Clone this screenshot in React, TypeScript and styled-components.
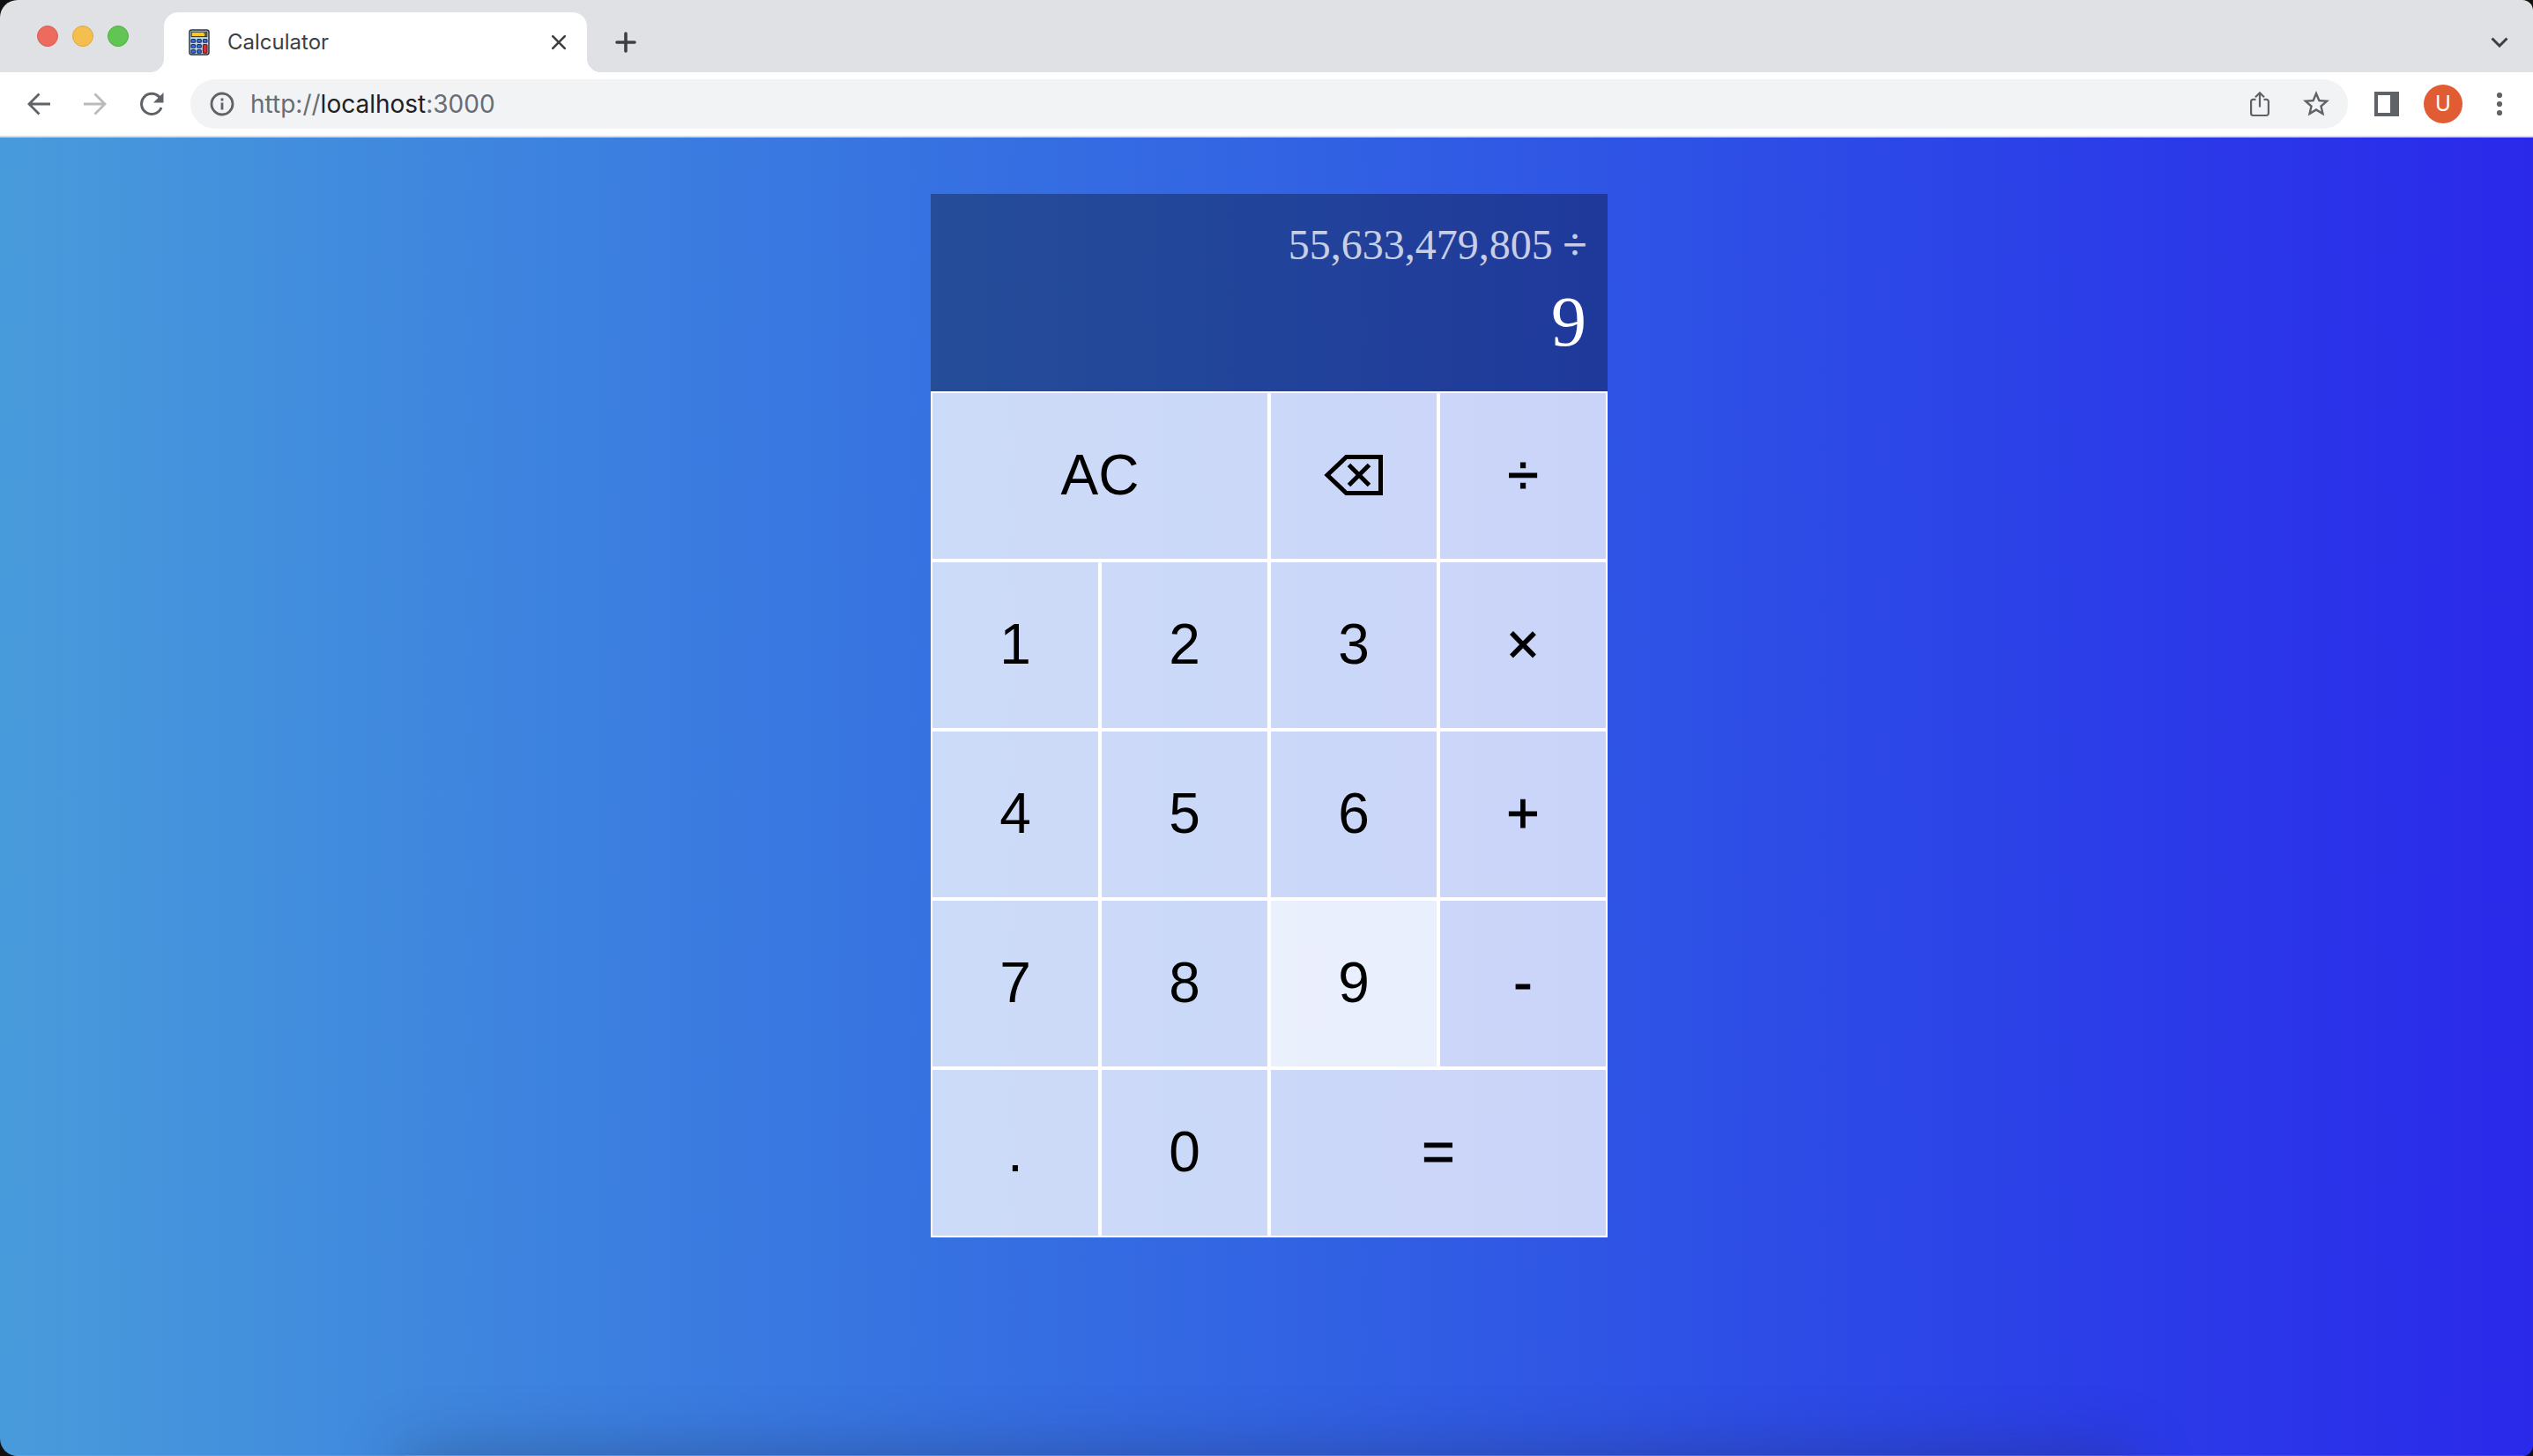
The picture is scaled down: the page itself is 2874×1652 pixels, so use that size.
import React, { useState } from 'react';
import styled, { createGlobalStyle } from 'styled-components';

const GlobalStyle = createGlobalStyle`
  *, *::before, *::after { box-sizing: border-box; }
  body { margin: 0; background: #111; }
  button { font: inherit; border: 0; padding: 0; background: none; cursor: pointer; }
`;

const Window = styled.div`
  display: flex;
  flex-direction: column;
  min-height: 100vh;
  overflow: hidden;
  border-radius: 20px 12px 12px 20px;
  font-family: Inter, Roboto, sans-serif;
`;

const TabStrip = styled.header`
  display: flex;
  align-items: stretch;
  height: 82px;
  padding: 0 16px 0 42px;
  background: #dfe1e5;
`;

const WindowControls = styled.div`
  display: flex;
  align-items: center;
  gap: 16px;
  margin-right: 40px;
`;

const Light = styled.button<{ $fill: string; $edge: string }>`
  width: 24px;
  height: 24px;
  && { border: 1px solid ${(p) => p.$edge}; }
  border-radius: 50%;
  background: ${(p) => p.$fill};
`;

const Tab = styled.div`
  position: relative;
  display: flex;
  align-items: center;
  gap: 20px;
  width: 480px;
  margin-top: 14px;
  padding: 0 16px 0 28px;
  border-radius: 16px 16px 0 0;
  background: #fff;

  &::before,
  &::after {
    content: '';
    position: absolute;
    bottom: 0;
    width: 16px;
    height: 16px;
  }
  &::before {
    right: 100%;
    background: radial-gradient(circle at 0 0, transparent 16px, #fff 16px);
  }
  &::after {
    left: 100%;
    background: radial-gradient(circle at 100% 0, transparent 16px, #fff 16px);
  }
`;

const TabTitle = styled.span`
  flex: 1;
  color: #3c4043;
  font-size: 24px;
  line-height: 32px;
`;

const IconButton = styled.button<{ $size: number; $color?: string }>`
  display: flex;
  flex: none;
  align-items: center;
  justify-content: center;
  width: ${(p) => p.$size}px;
  height: ${(p) => p.$size}px;
  color: ${(p) => p.$color ?? '#5f6368'};
`;

const StripActions = styled.div`
  display: flex;
  flex: 1;
  align-items: center;
  justify-content: space-between;
  margin-top: 14px;
  padding-left: 22px;
`;

const Toolbar = styled.nav`
  display: flex;
  align-items: center;
  height: 74px;
  padding: 0 14px 0 20px;
  border-bottom: 2px solid #d9dbdf;
  background: #fff;
`;

const History = styled.div`
  display: flex;
  gap: 16px;
  margin-right: 20px;
`;

const AddressBar = styled.div`
  display: flex;
  flex: 1;
  align-items: center;
  gap: 16px;
  height: 56px;
  margin-right: 20px;
  padding: 0 12px 0 20px;
  border-radius: 28px;
  background: #f1f3f4;
`;

const Address = styled.div`
  flex: 1;
  outline: none;
  color: #696c70;
  font-size: 28px;
  line-height: 36px;
`;

const Host = styled.span`
  color: #202124;
`;

const ToolbarEnd = styled.div`
  display: flex;
  align-items: center;
  gap: 18px;
`;

const Avatar = styled.button`
  width: 44px;
  height: 44px;
  border-radius: 50%;
  background: #e25c33;
  color: #fff;
  font-size: 24px;
  line-height: 44px;
`;

const Page = styled.main`
  position: relative;
  display: flex;
  flex: 1;
  align-items: flex-start;
  justify-content: center;
  padding: 64px 0;
  border-bottom: 1px solid rgba(255, 255, 255, 0.12);
  background: linear-gradient(to right, #489bdb, #3b7ee0 25%, #3264e3 50%, #2c47e7 75%, #2a29ea);
  background-clip: border-box;

  &::after {
    content: '';
    position: absolute;
    top: 100%;
    left: 16%;
    right: 16%;
    height: 80px;
    box-shadow: 0 0 72px rgba(34, 40, 60, 0.38);
  }
`;

const Calculator = styled.section`
  display: grid;
  grid-template-columns: repeat(4, 192px);
  grid-template-rows: minmax(224px, auto) repeat(5, 192px);
  margin-left: 6px;
`;

const Display = styled.div`
  display: flex;
  flex-direction: column;
  grid-column: 1 / -1;
  align-items: flex-end;
  justify-content: space-around;
  padding: 22px 24px 26px;
  background: rgba(0, 0, 0, 0.32);
  color: #fff;
  font-family: 'Liberation Serif', 'Times New Roman', serif;
`;

const Previous = styled.div`
  opacity: 0.75;
  font-size: 48px;
`;

const Sign = styled.span`
  -webkit-text-stroke: 1px currentColor;
`;

const Current = styled.output`
  font-size: 80px;
`;

const Key = styled.button<{ $wide?: boolean; $lit?: boolean; $operator?: boolean }>`
  display: flex;
  grid-column: span ${(p) => (p.$wide ? 2 : 1)};
  align-items: center;
  justify-content: center;
  && {
    padding-bottom: 2px;
    border: 2px solid #fff;
  }
  background: rgba(255, 255, 255, ${(p) => (p.$lit ? 0.9 : 0.75)});
  color: #000;
  font-family: 'Liberation Sans', Arial, sans-serif;
  font-size: 64px;
  -webkit-text-stroke: ${(p) => (p.$operator ? '1px #000' : '0')};
`;

const Favicon = () => (
  <svg width="24" height="30" viewBox="0 0 24 30" aria-hidden="true">
    <rect x="1" y="1" width="22" height="28" rx="2.5" fill="#c3daf2" stroke="#2b3440" strokeWidth="1.5" />
    <rect x="3.2" y="3.2" width="17.6" height="5.4" fill="#f6c927" stroke="#2b3440" strokeWidth="1.1" />
    <path d="M18 4.500h1.600v3H18M18 4.500v1.500h1.600" fill="none" stroke="#4a3b10" strokeWidth="0.9" />
    {[11.5, 17.5, 23.5].map((y) =>
      [3, 9.7, 16.4].map((x) =>
        x > 16 && y > 12 ? null : (
          <rect key={`${x}-${y}`} x={x} y={y} width="4.6" height="3.8" rx="1" fill="#2f6fea" stroke="#1d2c4d" strokeWidth="1.1" />
        ),
      ),
    )}
    <rect x="16.4" y="17.5" width="4.6" height="9.8" rx="1" fill="#e32b2b" stroke="#5a1820" strokeWidth="1.1" />
  </svg>
);

const CloseIcon = () => (
  <svg width="18" height="18" viewBox="0 0 18 18" fill="none" stroke="currentColor" strokeWidth="2.6" strokeLinecap="round">
    <path d="M2.200 2.200l13.600 13.600M15.800 2.200L2.200 15.800" />
  </svg>
);

const PlusIcon = () => (
  <svg width="24" height="24" viewBox="0 0 24 24" fill="none" stroke="currentColor" strokeWidth="3.6" strokeLinecap="round">
    <path d="M12 2v20M2 12h20" />
  </svg>
);

const ChevronIcon = () => (
  <svg width="20" height="12" viewBox="0 0 20 12" fill="none" stroke="currentColor" strokeWidth="3">
    <path d="M1.500 1.500L10 10l8.500-8.500" />
  </svg>
);

const ArrowIcon = ({ forward }: { forward?: boolean }) => (
  <svg width="28" height="28" viewBox="0 0 28 28" fill="none" stroke="currentColor" strokeWidth="2.8">
    <path d={forward ? 'M1 14h24M13.500 2.400L25 14 13.500 25.600' : 'M27 14H3M14.500 2.400L3 14l11.500 11.600'} />
  </svg>
);

const ReloadIcon = () => (
  <svg width="28" height="28" viewBox="0 0 28 28" aria-hidden="true">
    <path d="M23.500 7A11.600 11.600 0 1 0 25 18" fill="none" stroke="currentColor" strokeWidth="3" />
    <path d="M27.500 1v11.500H16z" fill="currentColor" />
  </svg>
);

const InfoIcon = () => (
  <svg width="32" height="32" viewBox="0 0 32 32" aria-hidden="true">
    <circle cx="16" cy="16" r="12" fill="none" stroke="currentColor" strokeWidth="2.8" />
    <path d="M14.600 14.500h2.800v8h-2.800zM14.600 9.500h2.800v3h-2.800z" fill="currentColor" />
  </svg>
);

const ShareIcon = () => (
  <svg width="24" height="30" viewBox="0 0 24 30" fill="none" stroke="currentColor" strokeWidth="2.2">
    <path d="M7.500 9.800H4.500a2.400 2.400 0 0 0-2.400 2.400v13.400A2.400 2.400 0 0 0 4.500 28h15a2.400 2.400 0 0 0 2.400-2.400V12.200a2.400 2.400 0 0 0-2.400-2.400h-3M12 18.500V2.500M7 7.200l5-5 5 5" />
  </svg>
);

const StarIcon = () => (
  <svg width="36" height="36" viewBox="0 0 24 24" aria-hidden="true">
    <path
      fill="currentColor"
      d="M22 9.240l-7.190-.62L12 2 9.190 8.630 2 9.240l5.460 4.730L5.820 21 12 17.270 18.180 21l-1.630-7.030L22 9.240zM12 15.400l-3.760 2.270 1-4.280-3.320-2.880 4.380-.38L12 6.100l1.710 4.040 4.380.38-3.320 2.880 1 4.280L12 15.400z"
    />
  </svg>
);

const PanelIcon = () => (
  <svg width="28" height="28" viewBox="0 0 28 28" aria-hidden="true">
    <path fill="currentColor" fillRule="evenodd" d="M0 0h28v28H0zM4 4v20h14V4z" />
  </svg>
);

const MenuIcon = () => (
  <svg width="8" height="28" viewBox="0 0 8 28" fill="currentColor" aria-hidden="true">
    <circle cx="4" cy="4" r="3.1" />
    <circle cx="4" cy="14" r="3.1" />
    <circle cx="4" cy="24" r="3.1" />
  </svg>
);

const BackspaceIcon = () => (
  <svg width="68" height="48" viewBox="0 0 68 48" fill="none" stroke="currentColor" aria-hidden="true">
    <path d="M25.500 3.500H64.500v41H25.500L4 24z" strokeWidth="5" />
    <path d="M28.500 12.500l23 23M51.500 12.500l-23 23" strokeWidth="5" />
  </svg>
);

type KeyDef = { label: string; wide?: boolean; name?: string; operator?: boolean };

const KEYS: KeyDef[] = [
  { label: 'AC', wide: true },
  { label: '', name: 'Delete' },
  { label: '÷', operator: true },
  { label: '1' },
  { label: '2' },
  { label: '3' },
  { label: '×', operator: true },
  { label: '4' },
  { label: '5' },
  { label: '6' },
  { label: '+', operator: true },
  { label: '7' },
  { label: '8' },
  { label: '9' },
  { label: '-', operator: true },
  { label: '.' },
  { label: '0' },
  { label: '=', wide: true, operator: true },
];

export default function App() {
  const [active, setActive] = useState('9');

  return (
    <Window>
      <GlobalStyle />
      <TabStrip>
        <WindowControls>
          <Light $fill="#ec6a5e" $edge="#d95b50" aria-label="Close window" />
          <Light $fill="#f5bf4f" $edge="#dea63a" aria-label="Minimize window" />
          <Light $fill="#61c554" $edge="#4fae3c" aria-label="Zoom window" />
        </WindowControls>
        <Tab>
          <Favicon />
          <TabTitle>Calculator</TabTitle>
          <IconButton $size={32} $color="#3c4043" aria-label="Close tab">
            <CloseIcon />
          </IconButton>
        </Tab>
        <StripActions>
          <IconButton $size={44} $color="#3c4043" aria-label="New tab">
            <PlusIcon />
          </IconButton>
          <IconButton $size={44} $color="#3c4043" aria-label="Search tabs">
            <ChevronIcon />
          </IconButton>
        </StripActions>
      </TabStrip>
      <Toolbar>
        <History>
          <IconButton $size={48} aria-label="Back">
            <ArrowIcon />
          </IconButton>
          <IconButton $size={48} $color="#bababc" aria-label="Forward">
            <ArrowIcon forward />
          </IconButton>
          <IconButton $size={48} aria-label="Reload">
            <ReloadIcon />
          </IconButton>
        </History>
        <AddressBar>
          <IconButton $size={32} aria-label="Site information">
            <InfoIcon />
          </IconButton>
          <Address role="textbox" aria-label="Address" contentEditable suppressContentEditableWarning spellCheck={false}>
            http://<Host>localhost</Host>:3000
          </Address>
          <IconButton $size={48} aria-label="Share">
            <ShareIcon />
          </IconButton>
          <IconButton $size={48} aria-label="Bookmark">
            <StarIcon />
          </IconButton>
        </AddressBar>
        <ToolbarEnd>
          <IconButton $size={48} aria-label="Side panel">
            <PanelIcon />
          </IconButton>
          <Avatar aria-label="Profile U">U</Avatar>
          <IconButton $size={48} aria-label="Menu">
            <MenuIcon />
          </IconButton>
        </ToolbarEnd>
      </Toolbar>
      <Page>
        <Calculator aria-label="Calculator">
          <Display>
            <Previous>
              55,633,479,805 <Sign>÷</Sign>
            </Previous>
            <Current>9</Current>
          </Display>
          {KEYS.map((key) => (
            <Key
              key={key.name ?? key.label}
              $wide={key.wide}
              $operator={key.operator}
              $lit={active === key.label}
              aria-label={key.name}
              onClick={() => setActive(key.label)}
            >
              {key.label || <BackspaceIcon />}
            </Key>
          ))}
        </Calculator>
      </Page>
    </Window>
  );
}
